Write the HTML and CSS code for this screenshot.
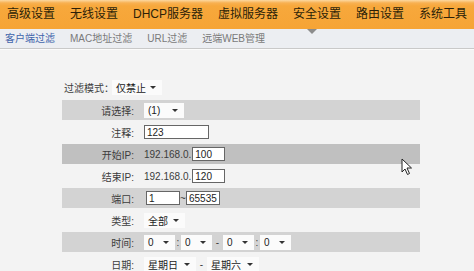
FILE: index.html
```html
<!DOCTYPE html>
<html lang="zh-CN">
<head>
    <meta charset="UTF-8">
    <title>安全设置 - 客户端过滤</title>
    <link rel="stylesheet" href="styles.css">
</head>
<body>
    <div class="menu">
        <span class="menu-item">高级设置</span>
        <span class="menu-item">无线设置</span>
        <span class="menu-item">DHCP服务器</span>
        <span class="menu-item">虚拟服务器</span>
        <span class="menu-item active">安全设置</span>
        <span class="menu-item">路由设置</span>
        <span class="menu-item">系统工具</span>
    </div>

    <div class="tabs">
        <span class="tab active">客户端过滤</span>
        <span class="tab">MAC地址过滤</span>
        <span class="tab">URL过滤</span>
        <span class="tab">远端WEB管理</span>
    </div>

    <div class="content">
        <div class="filter-mode">
            <span>过滤模式：</span>
            <span class="sel sel-mode">仅禁止</span>
        </div>

        <div class="rows">
            <div class="row shade">
                <span class="label">请选择:</span>
                <span class="sel sel-num">(1)</span>
            </div>
            <div class="row">
                <span class="label">注释:</span>
                <input class="txt txt-note" type="text" value="123">
            </div>
            <div class="row shade hover">
                <span class="label">开始IP:</span>
                <span class="prefix">192.168.0.</span>
                <input class="txt txt-ip" type="text" value="100">
            </div>
            <div class="row">
                <span class="label">结束IP:</span>
                <span class="prefix">192.168.0.</span>
                <input class="txt txt-ip" type="text" value="120">
            </div>
            <div class="row shade">
                <span class="label">端口:</span>
                <input class="txt txt-port first" type="text" value="1">
                <span class="sep">~</span>
                <input class="txt txt-port" type="text" value="65535">
            </div>
            <div class="row">
                <span class="label">类型:</span>
                <span class="sel sel-type">全部</span>
            </div>
            <div class="row shade">
                <span class="label">时间:</span>
                <span class="sel sel-time">0</span>
                <span class="sep">:</span>
                <span class="sel sel-time">0</span>
                <span class="sep dash">-</span>
                <span class="sel sel-time">0</span>
                <span class="sep">:</span>
                <span class="sel sel-time">0</span>
            </div>
            <div class="row">
                <span class="label">日期:</span>
                <span class="sel sel-day">星期日</span>
                <span class="sep dash">-</span>
                <span class="sel sel-day">星期六</span>
            </div>
            <svg class="cursor" width="12" height="18" viewBox="0 0 12 18">
                <path d="M1 1 L1 14 L4 11 L6.5 16.5 L8.5 15.5 L6 10 L10.5 10 Z" fill="#fff" stroke="#222" stroke-width="1"/>
            </svg>
        </div>
    </div>
</body>
</html>
```

FILE: styles.css
```css
body {
    margin: 0;
    background: #f3f3f3;
    font-family: "Liberation Sans", "Noto Sans CJK SC", sans-serif;
    font-size: 10px;
    color: #3c3c3c;
}

.menu {
    display: flex;
    gap: 15px;
    height: 29px;
    padding-left: 7px;
    background: linear-gradient(#fcd8a0 0, #f8b050 3px, #f7a83c 6px, #f6a435 100%);
    white-space: nowrap;
}
.menu-item {
    position: relative;
    line-height: 29px;
    font-size: 12px;
    color: #2c1f08;
}
.menu-item.active::after {
    content: "";
    position: absolute;
    top: 29px;
    left: 14px;
    border-top: 5px solid #8c8c8c;
    border-left: 5px solid transparent;
    border-right: 5px solid transparent;
}

.tabs {
    display: flex;
    gap: 15px;
    height: 19px;
    padding-left: 5px;
    background: #eceef2;
    border-bottom: 1px solid #c9c9c9;
    box-shadow: 0 1px 0 #fbfbfb;
}
.tab {
    line-height: 20px;
    color: #7a7a7a;
}
.tab.active {
    color: #4064aa;
}

.content {
    padding-top: 30px;
}

.filter-mode {
    display: flex;
    align-items: center;
    height: 17px;
    padding-left: 64px;
}

.rows {
    position: relative;
    width: 358px;
    margin: 3px 0 0 62px;
}
.row {
    display: flex;
    align-items: center;
    height: 20px;
    padding: 1px 0;
    background-clip: content-box;
    box-sizing: content-box;
}
.row.shade {
    background-color: #d3d3d3;
}
.row.hover {
    background-color: #c0c0c0;
}
.label {
    width: 72px;
    text-align: right;
    margin-right: 10px;
    flex-shrink: 0;
}

.sel {
    display: inline-flex;
    align-items: center;
    justify-content: space-between;
    height: 15px;
    padding: 0 6px 0 4px;
    background: #fbfbfb;
    color: #222;
    box-sizing: border-box;
}
.sel::after {
    content: "";
    border-top: 3px solid #333;
    border-left: 3px solid transparent;
    border-right: 3px solid transparent;
}
.sel-mode {
    width: 50px;
    margin-left: -2px;
}
.sel-num {
    width: 40px;
}
.sel-type {
    width: 41px;
}
.sel-time {
    width: 31px;
}
.sel-day {
    width: 52px;
}

.txt {
    height: 14px;
    padding: 0 2px;
    border: 1px solid #666;
    background: #fff;
    font: inherit;
    color: #222;
    box-sizing: border-box;
}
.txt-note {
    width: 65px;
}
.txt-ip {
    width: 33px;
}
.txt-port {
    width: 34px;
}
.txt-port.first {
    margin-left: 2px;
}

.prefix {
    margin-right: 1px;
}
.sep {
    width: 6px;
    text-align: center;
}
.sep.dash {
    width: 11px;
}

.cursor {
    position: absolute;
    left: 339px;
    top: 59px;
}
```
